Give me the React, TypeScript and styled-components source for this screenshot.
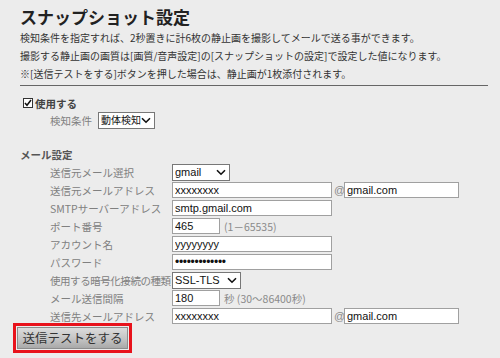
import React from "react";
import styled, { createGlobalStyle } from "styled-components";

const GlobalStyle = createGlobalStyle`
  body {
    margin: 0;
    background: #ececec;
    font-family: "Noto Sans CJK JP", "Liberation Sans", sans-serif;
    color: #333;
  }
`;

const Page = styled.div`
  width: 500px;
  height: 358px;
  padding: 6px 12px 0 20px;
  box-sizing: border-box;
  overflow: hidden;
`;

const Title = styled.h1`
  margin: 0;
  font-size: 17px;
  line-height: 22px;
  font-weight: 700;
  color: #222;
`;

const Description = styled.p`
  margin: 1px 0 0 0;
  font-size: 10px;
  line-height: 18px;
  color: #333;
`;

const Rule = styled.hr`
  margin: 2px 0 0 0;
  border: none;
  border-top: 1px solid #666;
`;

const CheckRow = styled.label`
  display: flex;
  align-items: center;
  gap: 2px;
  height: 18px;
  margin: 8px 0 0 3px;
  font-size: 10.5px;
  font-weight: 700;
  color: #444;
`;

const CheckBox = styled.span`
  display: inline-flex;
  align-items: center;
  justify-content: center;
  width: 8px;
  height: 8px;
  border: 1px solid #333;
  background: #fff;
`;

const SubRow = styled.div`
  display: flex;
  align-items: center;
  gap: 6px;
  height: 18px;
  margin-top: -1px;
  padding-left: 30px;
`;

const Label = styled.span<{ $tight?: boolean }>`
  font-size: 10.5px;
  color: #808080;
  white-space: nowrap;
  letter-spacing: ${(p) => (p.$tight ? "-0.45px" : "0")};
`;

const SectionTitle = styled.div`
  margin-top: 17px;
  height: 17px;
  line-height: 17px;
  font-size: 10.5px;
  font-weight: 700;
  color: #555;
`;

const Form = styled.div`
  display: grid;
  grid-template-columns: 122px 1fr;
  grid-auto-rows: 16px;
  row-gap: 2px;
  align-items: center;
  padding-left: 30px;
  margin-top: 1px;
`;

const Field = styled.div`
  display: flex;
  align-items: center;
  gap: 2px;
  height: 16px;
`;

const TextInput = styled.input<{ $w: number }>`
  display: block;
  width: ${(p) => p.$w}px;
  height: 16px;
  box-sizing: border-box;
  margin: 0;
  padding: 0 2px;
  border: 1px solid #a0a0a0;
  background: #fff;
  font-family: "Liberation Sans", "Noto Sans CJK JP", sans-serif;
  font-size: 11px;
  color: #111;
  outline: none;

  &[type="password"] {
    font-size: 12px;
    letter-spacing: -0.3px;
  }
`;

const Hint = styled.span`
  font-size: 10.5px;
  color: #8a8a8a;
  margin-left: 2px;
  white-space: nowrap;
`;

const At = styled.span`
  font-family: "Liberation Sans", sans-serif;
  font-size: 11px;
  color: #8a8a8a;
  width: 8px;
  text-align: center;
`;

const SelectWrap = styled.span<{ $w: number }>`
  position: relative;
  display: block;
  flex: none;
  width: ${(p) => p.$w}px;
  height: 17px;
`;

const Select = styled.select<{ $fs: number }>`
  appearance: none;
  -webkit-appearance: none;
  display: block;
  width: 100%;
  height: 100%;
  box-sizing: border-box;
  margin: 0;
  padding: 0 12px 0 2px;
  border: 1px solid #777;
  border-radius: 0;
  background: #fff;
  font-family: "Liberation Sans", "Noto Sans CJK JP", sans-serif;
  font-size: ${(p) => p.$fs}px;
  line-height: 15px;
  color: #111;
  outline: none;
`;

const Chevron = styled.svg`
  position: absolute;
  right: 4px;
  top: 5px;
  display: block;
  z-index: 1;
  pointer-events: none;
`;

const ButtonFrame = styled.div`
  display: inline-block;
  margin: -3px 0 0 -7px;
  padding: 1px;
  border: 3px solid #e8121b;
`;

const SendButton = styled.button`
  display: block;
  width: 111px;
  height: 22px;
  margin: 0;
  padding: 0;
  border: 1px solid #8c8c8c;
  background: linear-gradient(#dcdcdc, #c4c4c4 55%, #a9a9a9);
  font-family: "Noto Sans CJK JP", sans-serif;
  font-size: 12.5px;
  color: #333;
`;

type DropDownProps = { width: number; value: string; options: string[]; fontSize?: number };

const DropDown = ({ width, value, options, fontSize = 11 }: DropDownProps) => (
  <SelectWrap $w={width}>
    <Select $fs={fontSize} defaultValue={value}>
      {options.map((o) => (
        <option key={o}>{o}</option>
      ))}
    </Select>
    <Chevron width="10" height="7" viewBox="0 0 10 7">
      <path d="M1 1.2 L5 5.2 L9 1.2" fill="none" stroke="#111" strokeWidth="1.6" />
    </Chevron>
  </SelectWrap>
);

const App = () => {
  return (
    <Page>
      <GlobalStyle />
      <Title>スナップショット設定</Title>
      <Description>
        検知条件を指定すれば、2秒置きに計6枚の静止画を撮影してメールで送る事ができます。
        <br />
        撮影する静止画の画質は[画質/音声設定]の[スナップショットの設定]で設定した値になります。
        <br />
        ※[送信テストをする]ボタンを押した場合は、静止画が1枚添付されます。
      </Description>
      <Rule />

      <CheckRow>
        <CheckBox>
          <svg width="8" height="8" viewBox="0 0 8 8">
            <path d="M1 4 L3 6.3 L7 1" fill="none" stroke="#111" strokeWidth="1.5" />
          </svg>
        </CheckBox>
        使用する
      </CheckRow>
      <SubRow>
        <Label>検知条件</Label>
        <DropDown width={57} value="動体検知" options={["動体検知", "音検知"]} fontSize={10} />
      </SubRow>

      <SectionTitle>メール設定</SectionTitle>
      <Form>
        <Label>送信元メール選択</Label>
        <Field>
          <DropDown width={58} value="gmail" options={["gmail", "その他"]} />
        </Field>

        <Label>送信元メールアドレス</Label>
        <Field>
          <TextInput $w={160} defaultValue="xxxxxxxx" />
          <At>@</At>
          <TextInput $w={115} defaultValue="gmail.com" />
        </Field>

        <Label>SMTPサーバーアドレス</Label>
        <Field>
          <TextInput $w={160} defaultValue="smtp.gmail.com" />
        </Field>

        <Label>ポート番号</Label>
        <Field>
          <TextInput $w={48} defaultValue="465" />
          <Hint>(1－65535)</Hint>
        </Field>

        <Label>アカウント名</Label>
        <Field>
          <TextInput $w={160} defaultValue="yyyyyyyy" />
        </Field>

        <Label>パスワード</Label>
        <Field>
          <TextInput $w={160} type="password" defaultValue="zzzzzzzzzzzzz" />
        </Field>

        <Label $tight>使用する暗号化接続の種類</Label>
        <Field>
          <DropDown width={69} value="SSL-TLS" options={["SSL-TLS", "STARTTLS", "なし"]} />
        </Field>

        <Label>メール送信間隔</Label>
        <Field>
          <TextInput $w={48} defaultValue="180" />
          <Hint>秒 (30〜86400秒)</Hint>
        </Field>

        <Label>送信先メールアドレス</Label>
        <Field>
          <TextInput $w={160} defaultValue="xxxxxxxx" />
          <At>@</At>
          <TextInput $w={115} defaultValue="gmail.com" />
        </Field>
      </Form>

      <ButtonFrame>
        <SendButton type="button">送信テストをする</SendButton>
      </ButtonFrame>
    </Page>
  );
};

export default App;
